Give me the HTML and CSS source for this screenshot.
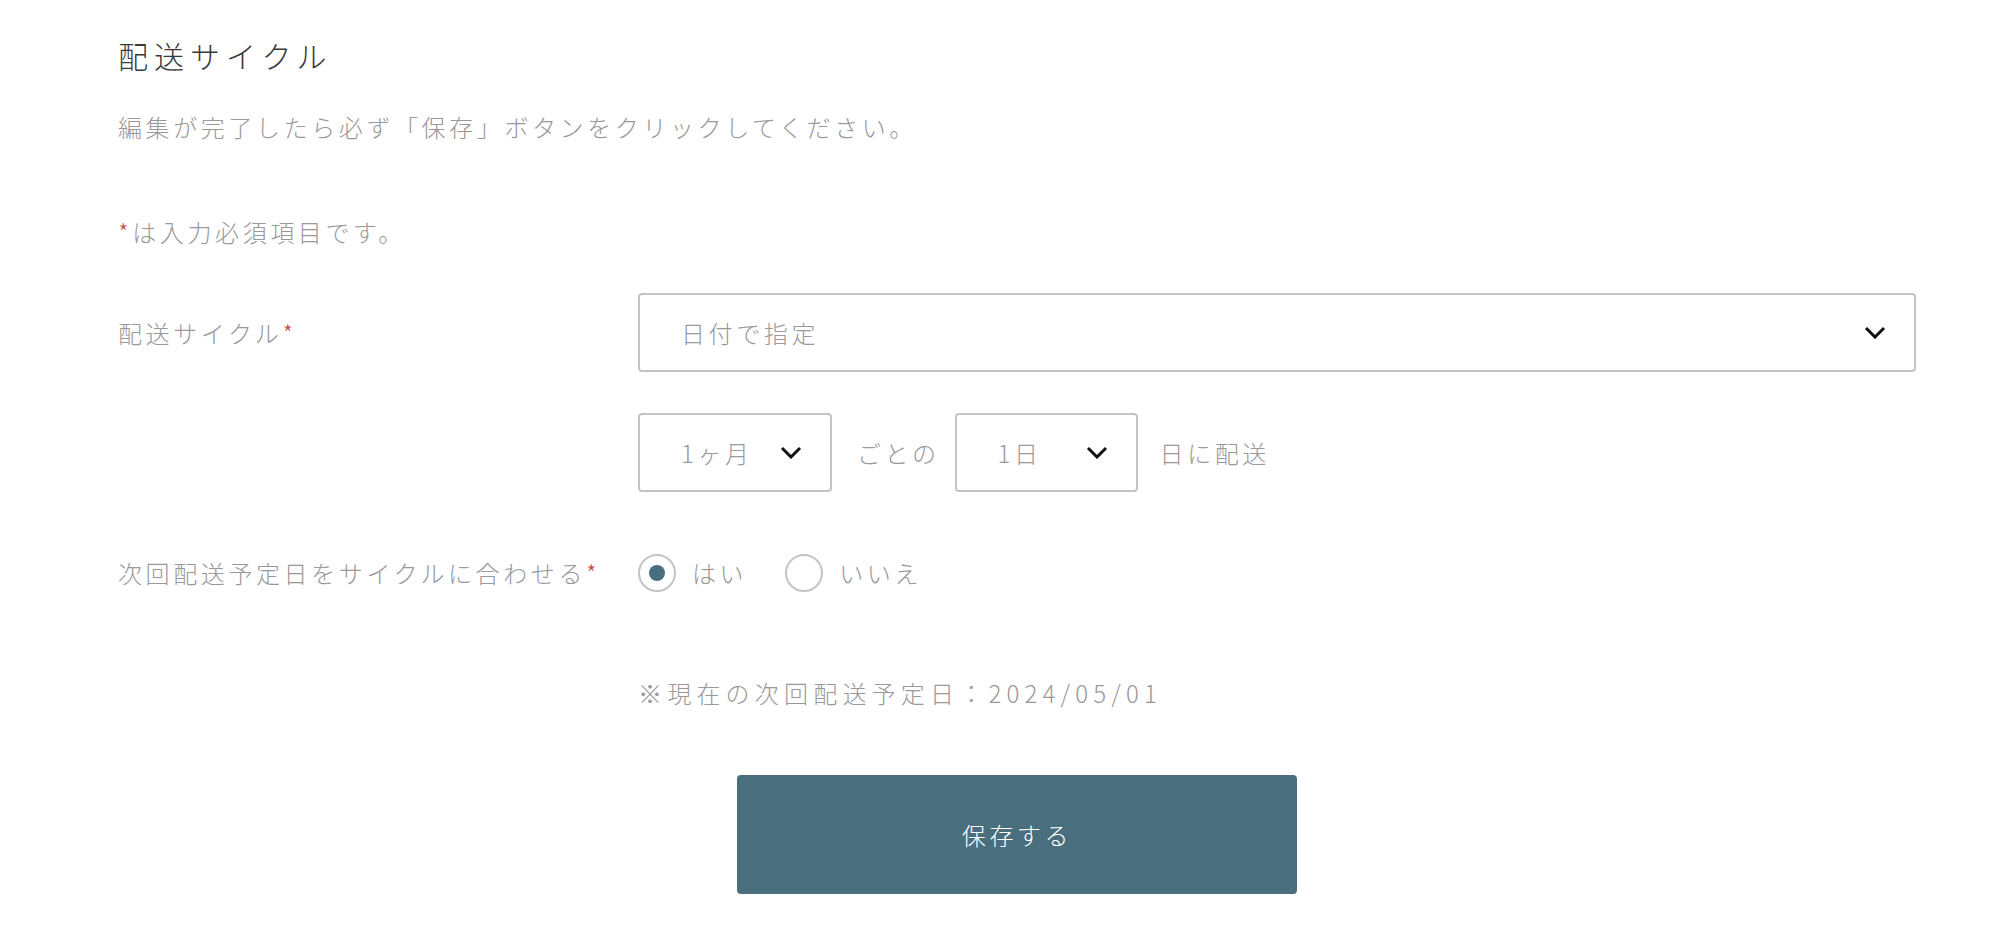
FILE: index.html
```html
<!DOCTYPE html>
<html lang="ja">
<head>
<meta charset="utf-8">
<title>配送サイクル</title>
<link rel="stylesheet" href="styles.css">
</head>
<body>
<main class="page">
  <h1 class="title">配送サイクル</h1>
  <p class="lead">編集が完了したら必ず「保存」ボタンをクリックしてください。</p>
  <p class="note"><span class="req">*</span>は入力必須項目です。</p>

  <form class="form">
    <div class="row">
      <div class="label">配送サイクル<span class="req">*</span></div>
      <div class="field">
        <div class="select select-wide">
          <span class="select-text">日付で指定</span>
          <svg class="chev" viewBox="0 0 22 13" width="22" height="13"><polyline points="2,2 11,11 20,2" fill="none" stroke="#111" stroke-width="3"/></svg>
        </div>
      </div>
    </div>

    <div class="row">
      <div class="label"></div>
      <div class="field inline">
        <div class="select select-month">
          <span class="select-text">1ヶ月</span>
          <svg class="chev" viewBox="0 0 22 13" width="22" height="13"><polyline points="2,2 11,11 20,2" fill="none" stroke="#111" stroke-width="3"/></svg>
        </div>
        <span class="text text-every">ごとの</span>
        <div class="select select-day">
          <span class="select-text">1日</span>
          <svg class="chev" viewBox="0 0 22 13" width="22" height="13"><polyline points="2,2 11,11 20,2" fill="none" stroke="#111" stroke-width="3"/></svg>
        </div>
        <span class="text">日に配送</span>
      </div>
    </div>

    <div class="row">
      <div class="label">次回配送予定日をサイクルに合わせる<span class="req">*</span></div>
      <div class="field inline radios">
        <label class="radio"><span class="circle checked"><span class="dot"></span></span><span class="text">はい</span></label>
        <label class="radio"><span class="circle"></span><span class="text">いいえ</span></label>
      </div>
    </div>

    <div class="row-date">
      <div></div>
      <p class="date">※現在の次回配送予定日：2024/05/01</p>
    </div>

    <div class="actions">
      <button type="button" class="btn">保存する</button>
    </div>
  </form>
</main>
</body>
</html>
```

FILE: styles.css
```css
html, body {
  margin: 0;
  padding: 0;
  background: #ffffff;
}

body {
  font-family: "Noto Sans CJK JP", "Noto Sans", sans-serif;
  font-weight: 300;
  color: #999999;
}

.page {
  width: 1798px;
  margin-left: 118px;
  padding-top: 33px;
}

.title {
  margin: 0;
  font-size: 30px;
  line-height: 45px;
  font-weight: 300;
  letter-spacing: 0.2em;
  color: #3a3a3a;
}

.lead {
  margin: 31px 0 0;
  font-size: 24px;
  line-height: 36px;
  letter-spacing: 0.15em;
}

.note {
  margin: 69px 0 0;
  font-size: 24px;
  line-height: 36px;
  letter-spacing: 0.15em;
}

.req {
  color: #c9463d;
}

.form {
  margin-top: 43px;
}

.row {
  display: grid;
  grid-template-columns: 520px 1fr;
  align-items: center;
  height: 79px;
  margin-bottom: 41px;
  font-size: 24px;
  letter-spacing: 0.15em;
}

.label {
  line-height: 36px;
}

.field {
  display: flex;
  align-items: center;
}

.inline {
  gap: 22px;
}

.select {
  box-sizing: border-box;
  height: 79px;
  border: 2px solid #c4c4c4;
  border-radius: 4px;
  display: flex;
  align-items: center;
  justify-content: space-between;
  padding: 0 28px 0 41px;
  background: #fff;
}

.select-wide {
  width: 100%;
}

.select-month {
  width: 194px;
}

.select-day {
  width: 183px;
}

.select-text {
  line-height: 36px;
  color: #9a9a9a;
}

.chev {
  display: block;
  flex: none;
}

.text {
  line-height: 36px;
}

.text-every {
  margin-left: 3px;
  margin-right: -7px;
}

.radios {
  gap: 0;
}

.radio {
  display: flex;
  align-items: center;
  gap: 16px;
  margin-right: 38px;
}

.circle {
  box-sizing: border-box;
  width: 38px;
  height: 38px;
  border: 2px solid #c4c4c4;
  border-radius: 50%;
  display: flex;
  align-items: center;
  justify-content: center;
}

.dot {
  width: 16px;
  height: 16px;
  border-radius: 50%;
  background: #496e7f;
}

.row-date {
  display: grid;
  grid-template-columns: 520px 1fr;
  margin-top: 63px;
}

.date {
  margin: 0;
  font-size: 24px;
  line-height: 36px;
  letter-spacing: 5.2px;
}

.actions {
  display: flex;
  justify-content: center;
  margin-top: 64px;
}

.btn {
  width: 560px;
  height: 119px;
  border: none;
  border-radius: 4px;
  background: #496e7e;
  color: #ffffff;
  font-family: "Noto Sans CJK JP", "Noto Sans", sans-serif;
  font-weight: 300;
  font-size: 24px;
  letter-spacing: 0.15em;
  cursor: pointer;
}
```
